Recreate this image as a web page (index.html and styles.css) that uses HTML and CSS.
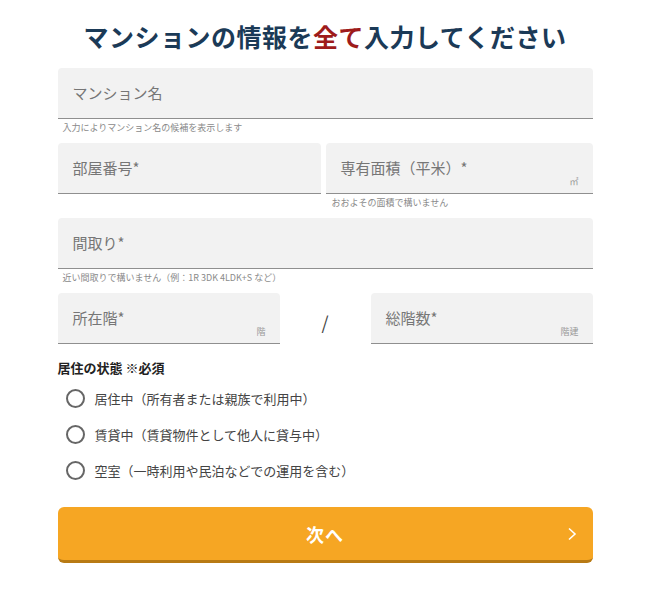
FILE: index.html
```html
<!DOCTYPE html>
<html lang="ja">
<head>
<meta charset="utf-8">
<link rel="stylesheet" href="styles.css">
</head>
<body>
<div class="wrap">
  <h1 class="title">マンションの情報を<span class="em">全て</span>入力してください</h1>

  <div class="group">
    <div class="field"><span class="label">マンション名</span></div>
    <p class="hint">入力によりマンション名の候補を表示します</p>
  </div>

  <div class="group">
    <div class="row2">
      <div class="field"><span class="label">部屋番号*</span></div>
      <div class="field"><span class="label">専有面積（平米）*</span><span class="unit">㎡</span></div>
    </div>
    <p class="hint hint-right">おおよその面積で構いません</p>
  </div>

  <div class="group">
    <div class="field"><span class="label">間取り*</span></div>
    <p class="hint">近い間取りで構いません（例：1R 3DK 4LDK+S など）</p>
  </div>

  <div class="floors">
    <div class="field"><span class="label">所在階*</span><span class="unit">階</span></div>
    <span class="slash">/</span>
    <div class="field"><span class="label">総階数*</span><span class="unit">階建</span></div>
  </div>

  <p class="section">居住の状態 ※必須</p>
  <ul class="radios">
    <li><span class="circle"></span>居住中（所有者または親族で利用中）</li>
    <li><span class="circle"></span>賃貸中（賃貸物件として他人に貸与中）</li>
    <li><span class="circle"></span>空室（一時利用や民泊などでの運用を含む）</li>
  </ul>

  <button class="next">次へ<span class="chev"><svg width="10" height="14" viewBox="0 0 10 14"><path d="M2 1.5 L8 7 L2 12.5" fill="none" stroke="#fff" stroke-width="1.6"/></svg></span></button>
</div>
</body>
</html>
```
FILE: styles.css
```css
* { box-sizing: border-box; }
body {
  margin: 0;
  background: #fff;
  font-family: "Noto Sans CJK JP", "Noto Sans", sans-serif;
  color: #333;
}
.wrap {
  width: 535px;
  margin: 0 auto;
  padding-top: 18px;
}
.title {
  margin: 0 -20px 14px;
  text-align: center;
  font-size: 25px;
  font-weight: 700;
  color: #1b3a57;
  line-height: 36px;
  letter-spacing: 0.5px;
}
.title .em { color: #9e1b1b; }
.field {
  position: relative;
  height: 51px;
  background: #f2f2f2;
  border-bottom: 1px solid #8f8f8f;
  border-radius: 4px 4px 0 0;
  display: flex;
  align-items: center;
  padding-left: 15px;
}
.label {
  font-size: 15px;
  color: #767676;
  margin-top: -2px;
}
.unit {
  position: absolute;
  right: 14px;
  bottom: 5px;
  font-size: 9px;
  color: #999;
}
.hint {
  margin: 3px 0 0;
  font-size: 9px;
  line-height: 12px;
  color: #8a8a8a;
  padding-left: 5px;
}
.hint-right { padding-left: 274px; }
.group { margin-bottom: 9px; }
.row2 {
  display: grid;
  grid-template-columns: 263px 1fr;
  gap: 5px;
}
.floors {
  display: grid;
  grid-template-columns: 222px 1fr 222px;
  align-items: center;
  margin-top: 8px;
}
.slash {
  text-align: center;
  font-size: 18px;
  color: #444;
  padding-top: 6px;
}
.section {
  margin: 14px 0 0;
  font-size: 13px;
  font-weight: 700;
  color: #222;
  line-height: 20px;
}
.radios {
  list-style: none;
  margin: 2px 0 0;
  padding: 0 0 0 8px;
}
.radios li {
  display: flex;
  align-items: center;
  height: 36px;
  font-size: 13px;
  color: #444;
}
.circle {
  width: 19px;
  height: 19px;
  border: 2px solid #666;
  border-radius: 50%;
  margin-right: 10px;
  flex: none;
}
.next {
  position: relative;
  display: block;
  width: 100%;
  height: 56px;
  margin-top: 19px;
  background: #f6a623;
  border: none;
  border-bottom: 3px solid #b87a14;
  border-radius: 6px;
  color: #fff;
  font-family: "Noto Sans CJK JP", sans-serif;
  font-size: 18px;
  font-weight: 700;
  letter-spacing: 1px;
  padding: 0;
}
.chev {
  position: absolute;
  right: 16px;
  top: 50%;
  transform: translateY(-50%);
  display: flex;
}
```
